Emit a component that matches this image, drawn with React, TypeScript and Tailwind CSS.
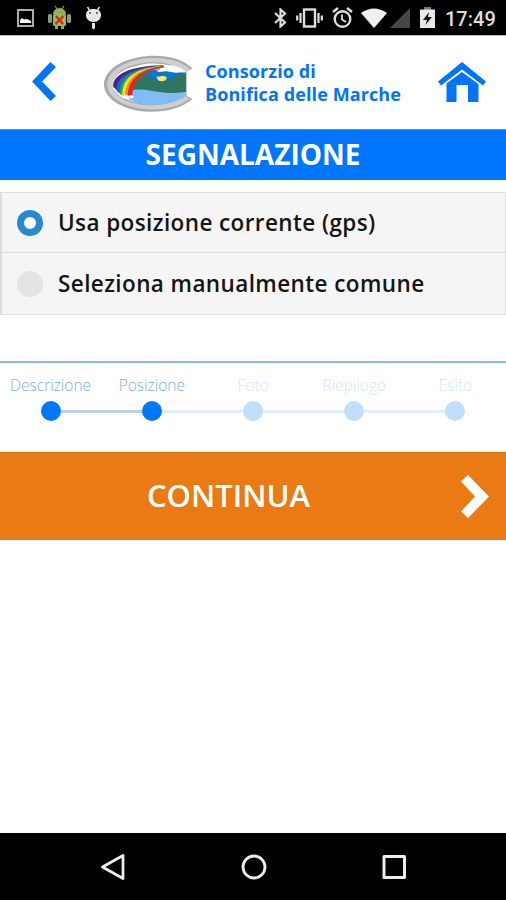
import clsx from 'clsx'

const options = [
  { label: 'Usa posizione corrente (gps)', checked: true },
  { label: 'Seleziona manualmente comune', checked: false },
]

const steps = ['Descrizione', 'Posizione', 'Foto', 'Riepilogo', 'Esito']
const currentStep = 1

function StatusBar() {
  return (
    <div className="h-[35px] shrink-0 bg-black flex items-center justify-between pl-[17px] pr-[11px] text-[#dedede]">
      <div className="flex items-center">
        <svg width="17" height="18" viewBox="0 0 17 18">
          <rect x="1" y="1" width="15" height="16" fill="none" stroke="#b5b5b5" strokeWidth="1.9" />
          <path d="M3 14v-3l2-2 2 1.500 3-.5 4 2v2z" fill="#fff" />
        </svg>
        <svg className="ml-[14px]" width="23" height="25" viewBox="0 0 23 25">
          <path d="M7 1l2 3M16 1l-2 3" stroke="#7f9a55" strokeWidth="1.2" />
          <path d="M5 9a6.5 6 0 0 1 13 0z" fill="#8fae5c" />
          <rect x="5" y="9" width="13" height="12" rx="1.5" fill="#94b85a" />
          <rect x="0" y="9" width="4" height="9" rx="1.5" fill="#86a070" />
          <rect x="19" y="9" width="4" height="9" rx="1.5" fill="#86a070" />
          <path d="M7 20h3v4H7zM13 20h3v4h-3z" fill="#8fae4c" />
          <path d="M8 11l7 8M15.500 11l-8 8" stroke="#d92a1c" strokeWidth="2.4" />
        </svg>
        <svg className="ml-[14px]" width="17" height="24" viewBox="0 0 17 24">
          <path d="M2.500 1l2 3M14.500 1l-2 3" stroke="#ddd" strokeWidth="1.5" />
          <path d="M1 9c0-4 3-6 7.500-6S16 5 16 9c0 4-3 7-7.500 7S1 13 1 9z" fill="#e8e8e8" />
          <circle cx="5" cy="7" r="1" fill="#444" />
          <circle cx="12" cy="7" r="1" fill="#444" />
          <path d="M7 17h3v5l-1.500 1.500L7 22z" fill="#e0e0e0" />
        </svg>
      </div>
      <div className="flex items-center">
        <svg width="13" height="20" viewBox="0 0 13 20" fill="none" stroke="currentColor" strokeWidth="2.2">
          <path d="M1 5l10 9.500L6.500 18.500V1.500L11 5.500 1 15" />
        </svg>
        <svg className="ml-[9px]" width="27" height="20" viewBox="0 0 27 20" fill="none" stroke="currentColor">
          <rect x="8" y="1.500" width="11" height="17" strokeWidth="2.4" />
          <path d="M4.500 5v10M22.500 5v10M1.200 7.500v5M25.800 7.500v5" strokeWidth="2.2" />
        </svg>
        <svg className="ml-[9px]" width="21" height="21" viewBox="0 0 21 21" fill="none" stroke="currentColor" strokeWidth="2.4">
          <circle cx="10.500" cy="12" r="7.800" />
          <path d="M1 5l5-4M20 5l-5-4" />
          <path d="M10 7.500v5l4 2.500" strokeWidth="1.800" />
        </svg>
        <svg className="ml-[8px]" width="26" height="20" viewBox="0 0 26 20">
          <path d="M0 5Q13-4 26 5L13 20z" fill="#f0f0f0" />
        </svg>
        <svg className="ml-[3px]" width="20" height="20" viewBox="0 0 20 20">
          <path d="M20 0v20H0z" fill="#464646" />
        </svg>
        <svg className="ml-[10px]" width="15" height="21" viewBox="0 0 15 21">
          <path d="M4 0h7v3H4z" fill="#777" />
          <path d="M0 2.500h15V21H0z" fill="#e8e8e8" />
          <path d="M9 5l-6 8h4l-1.500 5 6.500-8H8z" fill="#111" />
        </svg>
        <span className="w-[50px] ml-[10px] text-right whitespace-nowrap font-['Roboto',sans-serif] font-medium text-[20px] leading-none mt-[3px]">
          17:49
        </span>
      </div>
    </div>
  )
}

function Logo() {
  return (
    <svg className="ml-[47px] mt-[3px]" width="90" height="58" viewBox="24 30 270 174">
      {/* ring */}
      <path d="M292 70C250 25 150 22 85 50C10 84 8 146 75 180C145 214 245 204 292 162L275 152V80z" fill="#a9abab" />
      <path d="M284 71C240 34 150 30 90 56C22 88 20 142 80 174C145 204 235 197 284 162L275 156V78z" fill="#cdcfcf" />
      <path d="M273 80C225 46 150 44 98 66C40 92 40 138 90 166C145 191 225 184 273 153z" fill="#a9abab" />
      <path d="M273 82C240 60 190 52 150 57C80 68 43 98 55 130C85 188 215 188 273 152z" fill="#fff" />
      {/* landscape */}
      <path d="M140 85l35-16 98 14v34H120z" fill="#0877cf" />
      <path d="M172 62c20-8 40 0 55-1 20 2 36 10 46 20l-30 2-28-4-25 2z" fill="#fff" />
      <path d="M160 68q12-9 40-3l-8 12q-16-6-35 0z" fill="#a9a4a5" />
      <path d="M106 120l20-26 21-10q10 6 20 14 10 9 22 9l28-1q10-1 18-8 8-7 20-9l18-7v64H104z" fill="#2f7660" />
      <path d="M185 94q6 2 15-1 9-1 15 3 0 13-15 13t-15-15z" fill="#fbe96c" />
      <path d="M104 136c34-7 64 2 94 6 25 4 50 1 75-1v11c-50 32-116 36-171 12z" fill="#7fbcf5" />
      {/* rainbow */}
      <path d="M55 126C50 92 100 62 205 61V67C150 74 112 100 110 152L86 152 72 142z" fill="#4b2484" />
      <path d="M65 138C62 95 110 65 205 62V67C150 74 112 100 110 152L80 150z" fill="#1767d5" />
      <path d="M75 145C72 98 118 66 205 62V67C150 74 112 100 110 152L86 151z" fill="#22ab55" />
      <path d="M82 150C80 100 124 67 205 63V67C150 74 112 100 110 152z" fill="#f7e12a" />
      <path d="M91 152C90 102 132 68 205 63V67C150 74 112 100 110 152z" fill="#f58a1d" />
      <path d="M99 152C98 104 138 70 207 63V67C152 74 114 100 112 152z" fill="#df291c" />
      <path d="M74 152q5-6 12 0 8-5 14 0 9-4 17 2l-4 6H84z" fill="#f4f6fa" />
    </svg>
  )
}

function Header() {
  return (
    <header className="h-[94px] shrink-0 flex items-center pl-[32px] pr-[20px] text-[#0074fb] border-t border-[#bbb]">
      <svg className="mt-[-3px]" width="24" height="39" viewBox="0 0 24 39">
        <path d="M0 19.500L18.500 0 24 5 10 19.500 24 34l-5.500 5z" fill="currentColor" />
      </svg>
      <Logo />
      <p className="ml-[12px] mt-px whitespace-nowrap font-bold text-[18px] leading-[23px] tracking-[0.1px]">
        Consorzio di
        <br />
        Bonifica delle Marche
      </p>
      <svg className="ml-auto mt-[-2px]" width="48" height="40" viewBox="0 0 48 40" fill="currentColor">
        <path d="M0 19.500L24 0l24 19.500-3 4L24 7.500 3 23.500z" />
        <path d="M8.500 21.500L24 10l16.500 12V40H30V23H18.500v17h-10z" />
      </svg>
    </header>
  )
}

function OptionList() {
  return (
    <div className="mt-[12px] h-[123px] shrink-0 border border-l-2 border-[#dedede] bg-[#f5f5f5]">
      {options.map((o, i) => (
        <label
          key={o.label}
          className={clsx('flex items-center pl-[15px]', i === 0 ? 'h-[60px] border-b border-[#dadada]' : 'h-[61px]')}
        >
          <span
            className={clsx(
              'size-[26px] shrink-0 rounded-full',
              o.checked ? 'border-[7px] border-[#2789ce] bg-white' : 'bg-[#e3e3e3]'
            )}
          />
          <span className="ml-[15px] mt-px whitespace-nowrap text-[22.5px] leading-[30px] font-semibold tracking-[0.4px] text-[#151515]">
            {o.label}
          </span>
        </label>
      ))}
    </div>
  )
}

function Steps() {
  return (
    <div className="mt-[46px] h-[91px] shrink-0 border-t-2 border-[#8fb4f5] pt-[11px] grid grid-cols-5">
      {steps.map((step, i) => {
        const done = i <= currentStep
        return (
          <div key={step} className="flex flex-col items-center">
            <span
              className={clsx(
                'whitespace-nowrap text-[15.500px] leading-[22px] font-light',
                done ? 'text-[#7fa8fb]' : 'text-[#d6e4ff]'
              )}
            >
              {step}
            </span>
            <div className="mt-[5px] w-full flex items-center">
              <span className={clsx('h-[3px] flex-1', i > 0 && (done ? 'bg-[#bdcbfb]' : 'bg-[#e1eeff]'))} />
              <span className={clsx('size-[20px] rounded-full', done ? 'bg-[#0078fb]' : 'bg-[#c1deff]')} />
              <span
                className={clsx(
                  'h-[3px] flex-1',
                  i < steps.length - 1 && (i < currentStep ? 'bg-[#bdcbfb]' : 'bg-[#e1eeff]')
                )}
              />
            </div>
          </div>
        )
      })}
    </div>
  )
}

function NavBar() {
  return (
    <nav className="mt-auto h-[67px] shrink-0 bg-black flex items-center justify-between pl-[100px] pr-[99px]">
      <svg width="26" height="28" viewBox="0 0 26 28" fill="none" stroke="#ececec" strokeWidth="2.800" strokeLinejoin="round">
        <path d="M2.500 14L23 2.500v23z" />
      </svg>
      <svg width="28" height="28" viewBox="0 0 28 28" fill="none" stroke="#ececec" strokeWidth="2.800">
        <circle cx="14" cy="14" r="11" />
      </svg>
      <svg width="26" height="28" viewBox="0 0 26 28" fill="none" stroke="#ececec" strokeWidth="3" strokeLinejoin="round">
        <rect x="3" y="3.500" width="20.500" height="21" />
      </svg>
    </nav>
  )
}

export default function App() {
  return (
    <div className="w-full h-screen flex flex-col overflow-hidden bg-white font-['Open_Sans',sans-serif]">
      <StatusBar />
      <Header />
      <h1 className="h-[51px] pb-[3px] shrink-0 flex items-center justify-center bg-[#0076fd] border-t border-[#4c91e8] text-white font-bold text-[28px] leading-none">
        SEGNALAZIONE
      </h1>
      <OptionList />
      <Steps />
      <button className="h-[88px] pb-[2px] shrink-0 flex items-center bg-[#ea7b14] border-t border-[#d97012] text-white">
        <span className="w-[457px] text-center text-[31px] leading-none font-semibold">CONTINUA</span>
        <svg className="ml-[4px] mt-[2px]" width="28" height="43" viewBox="0 0 28 43">
          <path d="M7 0l21 21.500L7 43 0 36.500l14-15L0 6.500z" fill="#fff" />
        </svg>
      </button>
      <NavBar />
    </div>
  )
}
